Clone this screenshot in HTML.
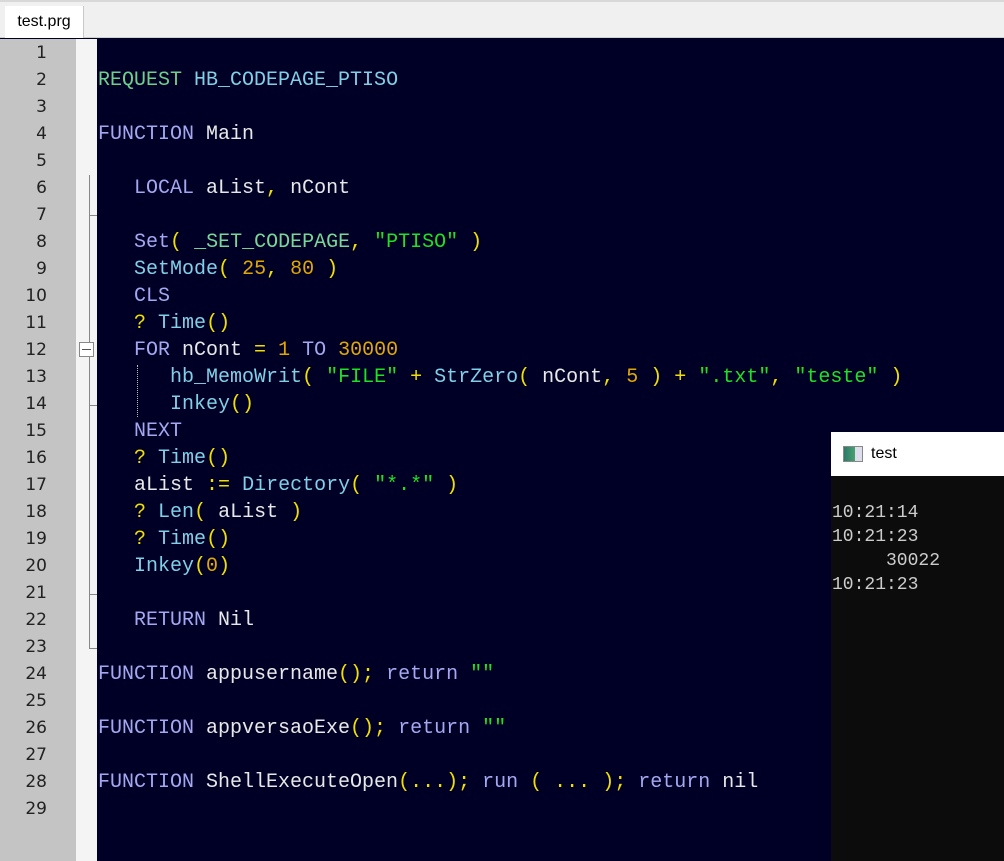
<!DOCTYPE html><html><head><style>
body{margin:0;width:1004px;height:861px;overflow:hidden;background:#000026;position:relative;font-family:"Liberation Mono",monospace}
#tabbar{position:absolute;left:0;top:0;width:1004px;height:38px;background:#f0f0f0;border-top:2px solid #d8d8d8;box-sizing:border-box;border-bottom:1px solid #d0d0d0}
#tab{position:absolute;left:5px;top:4px;width:78px;height:32px;background:#fff;border-right:1px solid #c8c8c8;font:16px "Liberation Sans",sans-serif;color:#000;text-align:center;line-height:32px}
#gut{position:absolute;left:0;top:39px;width:76px;height:822px;background:#c4c4c4}
#fold{position:absolute;left:76px;top:39px;width:21px;height:822px;background:#f4f4f4}
.n{position:absolute;left:0;width:47px;text-align:right;font:17px "DejaVu Sans",sans-serif;color:#222;height:27px;line-height:27px}
.l{position:absolute;left:98px;white-space:pre;font-size:20px;height:27px;line-height:27px;color:#e8e8e8}
.k{color:#a4a8f0}.f{color:#80d0e8}.c{color:#78d898}.s{color:#20e020}.d{color:#e0a800}.o{color:#f0e000}
#con{position:absolute;left:831px;top:432px;width:173px;height:429px;background:#0c0c0c}
#ct{position:absolute;left:0;top:0;width:173px;height:44px;background:#fff;font:16px "Liberation Sans",sans-serif;line-height:44px}
.cl{position:absolute;left:1px;white-space:pre;font-size:18px;color:#cccccc;line-height:24px}
</style></head><body>
<div id="tabbar"><div id="tab">test.prg</div></div>
<div id="gut"></div><div id="fold"></div>
<div style="position:absolute;left:89px;top:175px;width:1px;height:473px;background:#888"></div>
<div style="position:absolute;left:89px;top:215px;width:8px;height:1px;background:#888"></div>
<div style="position:absolute;left:89px;top:405px;width:8px;height:1px;background:#888"></div>
<div style="position:absolute;left:89px;top:594px;width:8px;height:1px;background:#888"></div>
<div style="position:absolute;left:89px;top:648px;width:8px;height:1px;background:#888"></div>
<div style="position:absolute;left:79px;top:342px;width:13px;height:13px;border:1px solid #888;background:#fff"></div>
<div style="position:absolute;left:82px;top:349px;width:9px;height:1px;background:#555"></div>
<div style="position:absolute;left:137px;top:365px;width:0;height:52px;border-left:1px dotted #bbb"></div>
<div class="n" style="top:40px">1</div><div class="n" style="top:67px">2</div><div class="n" style="top:94px">3</div><div class="n" style="top:121px">4</div><div class="n" style="top:148px">5</div><div class="n" style="top:175px">6</div><div class="n" style="top:202px">7</div><div class="n" style="top:229px">8</div><div class="n" style="top:256px">9</div><div class="n" style="top:283px">10</div><div class="n" style="top:310px">11</div><div class="n" style="top:337px">12</div><div class="n" style="top:364px">13</div><div class="n" style="top:391px">14</div><div class="n" style="top:418px">15</div><div class="n" style="top:445px">16</div><div class="n" style="top:472px">17</div><div class="n" style="top:499px">18</div><div class="n" style="top:526px">19</div><div class="n" style="top:553px">20</div><div class="n" style="top:580px">21</div><div class="n" style="top:607px">22</div><div class="n" style="top:634px">23</div><div class="n" style="top:661px">24</div><div class="n" style="top:688px">25</div><div class="n" style="top:715px">26</div><div class="n" style="top:742px">27</div><div class="n" style="top:769px">28</div><div class="n" style="top:796px">29</div>
<div class="l" style="top:67px"><span style="color:#6fd08c">REQUEST</span> <span class="f">HB_CODEPAGE_PTISO</span></div>
<div class="l" style="top:121px"><span class="k">FUNCTION</span> Main</div>
<div class="l" style="top:175px">   <span class="k">LOCAL</span> aList<span class="o">,</span> nCont</div>
<div class="l" style="top:229px">   <span class="k">Set</span><span class="o">(</span> <span class="c">_SET_CODEPAGE</span><span class="o">,</span> <span class="s">"PTISO"</span> <span class="o">)</span></div>
<div class="l" style="top:256px">   <span class="f">SetMode</span><span class="o">(</span> <span class="d">25</span><span class="o">,</span> <span class="d">80</span> <span class="o">)</span></div>
<div class="l" style="top:283px">   <span class="k">CLS</span></div>
<div class="l" style="top:310px">   <span class="o">?</span> <span class="f">Time</span><span class="o">()</span></div>
<div class="l" style="top:337px">   <span class="k">FOR</span> nCont <span class="o">=</span> <span class="d">1</span> <span class="k">TO</span> <span class="d">30000</span></div>
<div class="l" style="top:364px">      <span class="f">hb_MemoWrit</span><span class="o">(</span> <span class="s">"FILE"</span> <span class="o">+</span> <span class="f">StrZero</span><span class="o">(</span> nCont<span class="o">,</span> <span class="d">5</span> <span class="o">)</span> <span class="o">+</span> <span class="s">".txt"</span><span class="o">,</span> <span class="s">"teste"</span> <span class="o">)</span></div>
<div class="l" style="top:391px">      <span class="f">Inkey</span><span class="o">()</span></div>
<div class="l" style="top:418px">   <span class="k">NEXT</span></div>
<div class="l" style="top:445px">   <span class="o">?</span> <span class="f">Time</span><span class="o">()</span></div>
<div class="l" style="top:472px">   aList <span class="o">:=</span> <span class="f">Directory</span><span class="o">(</span> <span class="s">"*.*"</span> <span class="o">)</span></div>
<div class="l" style="top:499px">   <span class="o">?</span> <span class="f">Len</span><span class="o">(</span> aList <span class="o">)</span></div>
<div class="l" style="top:526px">   <span class="o">?</span> <span class="f">Time</span><span class="o">()</span></div>
<div class="l" style="top:553px">   <span class="f">Inkey</span><span class="o">(</span><span class="d">0</span><span class="o">)</span></div>
<div class="l" style="top:607px">   <span class="k">RETURN</span> Nil</div>
<div class="l" style="top:661px"><span class="k">FUNCTION</span> appusername<span class="o">();</span> <span class="k">return</span> <span class="s">""</span></div>
<div class="l" style="top:715px"><span class="k">FUNCTION</span> appversaoExe<span class="o">();</span> <span class="k">return</span> <span class="s">""</span></div>
<div class="l" style="top:769px"><span class="k">FUNCTION</span> ShellExecuteOpen<span class="o">(...);</span> <span class="k">run</span> <span class="o">(</span> <span class="o">...</span> <span class="o">);</span> <span class="k">return</span> nil</div>
<div id="con"><div id="ct"><span style="position:absolute;left:12px;top:14px;width:18px;height:14px;border:1px solid #888;background:linear-gradient(90deg,#2a7a6a 0,#4aa070 60%,#dde 60%)"></span><span style="position:absolute;left:40px">test</span></div>
<div class="cl" style="top:69px">10:21:14</div><div class="cl" style="top:93px">10:21:23</div><div class="cl" style="top:117px">     30022</div><div class="cl" style="top:141px">10:21:23</div></div>
</body></html>
